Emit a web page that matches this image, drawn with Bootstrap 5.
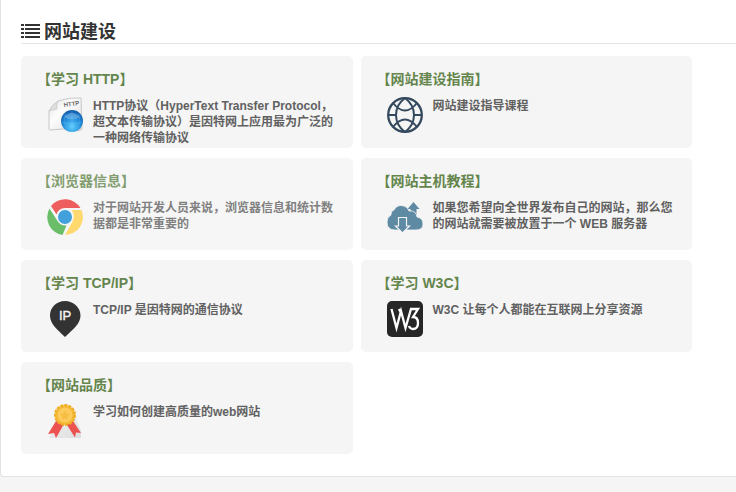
<!DOCTYPE html>
<html lang="zh-CN">
<head>
<meta charset="utf-8">
<meta name="viewport" content="width=device-width, initial-scale=1">
<title>网站建设</title>
<link href="https://cdn.jsdelivr.net/npm/bootstrap@5.3.0/dist/css/bootstrap.min.css" rel="stylesheet">
<style>
body{background:#f5f5f5;font-family:"Liberation Sans","Noto Sans CJK SC",sans-serif;font-size:12px;line-height:16px;color:#616161;text-spacing-trim:space-all}
.panel{background:#fff;border:1px solid #e3e3e3;border-right:0;border-top:0;border-radius:0 0 0 4px;padding:22px 0 22px 20px}
.section-title{font-size:18px;line-height:21px;color:#333;border-bottom:1px solid #e5e5e5;margin-bottom:12px;gap:4px}
.courses{gap:10px 8px;padding-right:44px}
.courses>.course{flex:0 0 calc(50% - 4px)}
.course{min-height:92px;background:#f5f5f5;border-radius:5px;padding:12px 16px 1px;text-decoration:none;color:#616161}
.course h2{font-size:14px;line-height:22px;color:#64854c;margin-bottom:7px}
.course-body{gap:10px;padding-left:10px}
.course-body>span{padding-top:1px}
.course.active{opacity:.8}
.course svg{flex:none}
</style>
<script src="https://cdn.jsdelivr.net/npm/bootstrap@5.3.0/dist/js/bootstrap.bundle.min.js"></script>
</head>
<body>
<main class="panel">
<h1 class="section-title d-flex align-items-center fw-bold">
<svg width="19" height="18" viewBox="0 0 19 18" fill="#333" aria-hidden="true"><path d="M0 0h3v2H0zM4 0h15v2H4zM0 4h3v2H0zM4 4h15v2H4zM0 8h3v2H0zM4 8h15v2H4zM0 12h3v2H0zM4 12h15v2H4z"/></svg>
网站建设</h1>
<div class="courses d-flex flex-wrap">
<a class="course fw-bold" href="#http"><h2 class="fw-bold">【学习 HTTP】</h2>
<div class="course-body d-flex align-items-start">
<svg width="36" height="36" viewBox="0 0 36 36" aria-hidden="true"><defs><linearGradient id="paper" x1="0" y1="0" x2="1" y2="1"><stop stop-color="#e5e5e5"/><stop offset=".4" stop-color="#fcfcfc"/><stop offset="1" stop-color="#ddd"/></linearGradient><radialGradient id="blue" cx=".5" cy=".75" r=".7"><stop stop-color="#62d0ff"/><stop offset=".55" stop-color="#248fdc"/><stop offset="1" stop-color="#1260ae"/></radialGradient></defs><path d="M11 4Q22 0 34 1l1 31q-3 3-8 1-10-2-24 0-1 0-1-2L2 14Z" fill="url(#paper)" stroke="#bbb" stroke-width=".8"/><path d="M11 4q-2 4-1 8l-8 2Q5 7 11 4Z" fill="#ddd" stroke="#bbb" stroke-width=".5"/><text x="17" y="10" font-size="6" font-weight="700" fill="#666" transform="rotate(-8 17 10)">HTTP</text><circle cx="25" cy="24" r="11" fill="url(#blue)"/><path d="M17 20q8-8 16 0-8 5-16 0" fill="#a6d8fa" opacity=".4"/><path d="M15 25q10 4 20 0M25 14v21M19 16q-4 8 1 17M31 16q4 8-1 17" stroke="#8dd8ff" stroke-width=".5" fill="none" opacity=".4"/></svg>
<span>HTTP协议（HyperText Transfer Protocol，超文本传输协议）是因特网上应用最为广泛的一种网络传输协议</span></div></a>
<a class="course fw-bold" href="#guide"><h2 class="fw-bold">【网站建设指南】</h2>
<div class="course-body d-flex align-items-start">
<svg width="36" height="36" viewBox="0 0 36 36" fill="none" stroke="#34495e" stroke-width="2" aria-hidden="true"><circle cx="18" cy="18" r="16.800" stroke-width="2.300"/><path d="M18 1C6 10 6 26 18 35C30 26 30 10 18 1M6 6q12 15 24 0M6 30q12-15 24 0M1 18h8M27 18h8"/></svg>
<span>网站建设指导课程</span></div></a>
<a class="course active fw-bold" href="#browsers"><h2 class="fw-bold">【浏览器信息】</h2>
<div class="course-body d-flex align-items-start">
<svg width="36" height="36" viewBox="0 0 36 36" aria-hidden="true"><path d="M4 7A18 18 0 0 1 33.500 9H18a9 9 0 0 0-8.500 6.500Z" fill="#ec3636"/><path d="M2.500 9.500 10.500 22q3 5 9 4.500L15.500 36A18 18 0 0 1 2.500 9.500Z" fill="#45ae45"/><path d="M24.500 11h10A18 18 0 0 1 18 36l7-12.500q4-7-.5-12.500Z" fill="#ffcf4b"/><circle cx="18" cy="18" r="7" fill="#1389d2"/></svg>
<span>对于网站开发人员来说，浏览器信息和统计数据都是非常重要的</span></div></a>
<a class="course fw-bold" href="#hosting"><h2 class="fw-bold">【网站主机教程】</h2>
<div class="course-body d-flex align-items-start">
<svg width="36" height="36" viewBox="0 0 36 36" fill="#5e8ba3" aria-hidden="true"><path d="m26.500 3 6 7h-3v8h-6v-8h-3Z"/><path d="M8 31Q0 31 0 23q0-5 4-7-.5-4 3-5Q10 5 17 7q4 1 5 5 7-1 8 6 6 1 6 7 0 6-7 6Z" stroke="#f5f5f5" stroke-width=".8"/><path d="M11.500 18.500h8V27h3L15.500 34 8.500 27h3Z" stroke="#f5f5f5" stroke-width="1.200"/></svg>
<span>如果您希望向全世界发布自己的网站，那么您的网站就需要被放置于一个 WEB 服务器</span></div></a>
<a class="course fw-bold" href="#tcpip"><h2 class="fw-bold">【学习 TCP/IP】</h2>
<div class="course-body d-flex align-items-start">
<svg width="36" height="36" viewBox="0 0 36 36" aria-hidden="true"><path d="M18 0C9.500 0 3 6.500 3 14.500 3 23 10 28 18 36c8-8 15.500-13 15.500-21.500C33.500 6.500 26.500 0 18 0Z" fill="#333"/><text x="12" y="19" font-size="13" fill="#f5f5f5" stroke="#f5f5f5" stroke-width=".4" font-weight="400">IP</text></svg>
<span>TCP/IP 是因特网的通信协议</span></div></a>
<a class="course fw-bold" href="#w3c"><h2 class="fw-bold">【学习 W3C】</h2>
<div class="course-body d-flex align-items-start">
<svg width="36" height="36" viewBox="0 0 36 36" aria-hidden="true"><rect width="36" height="36" rx="5" fill="#262626"/><path d="m4.500 8 5 19 4.500-17 4.500 17L24 8h7l-5 8q5 0 5 6 0 6-5 6-3 0-4-3M12 8l2 4" fill="none" stroke="#fff" stroke-width="2.300"/></svg>
<span>W3C 让每个人都能在互联网上分享资源</span></div></a>
<a class="course fw-bold" href="#quality"><h2 class="fw-bold">【网站品质】</h2>
<div class="course-body d-flex align-items-start">
<svg width="36" height="36" viewBox="0 0 36 36" aria-hidden="true"><defs><linearGradient id="shade" x1="0" y1="0" x2="1" y2="1"><stop stop-color="#f5f5f5"/><stop offset="1" stop-color="#ddd"/></linearGradient></defs><path d="M2 34 24 3l10 25v7H3Z" fill="url(#shade)"/><path d="m9 18-8 13 6-1 2 5 8-14ZM26 18l8 12-5-.5-1 5-9-14Z" fill="#ec5250"/><circle cx="18" cy="12" r="10" fill="#f6bb2f" stroke="#efac25" stroke-width="2" stroke-dasharray="3 1.200"/><circle cx="18" cy="12" r="8" fill="#fccb5c" stroke="#f3b838"/><path d="m18 7 1.500 3.500 3.500.5-2.500 2.500.5 3.500-3-1.500-3 1.500.5-3.500L13 11l3.500-.5Z" fill="#f6be43"/></svg>
<span>学习如何创建高质量的web网站</span></div></a>
</div>
</main>
</body>
</html>
